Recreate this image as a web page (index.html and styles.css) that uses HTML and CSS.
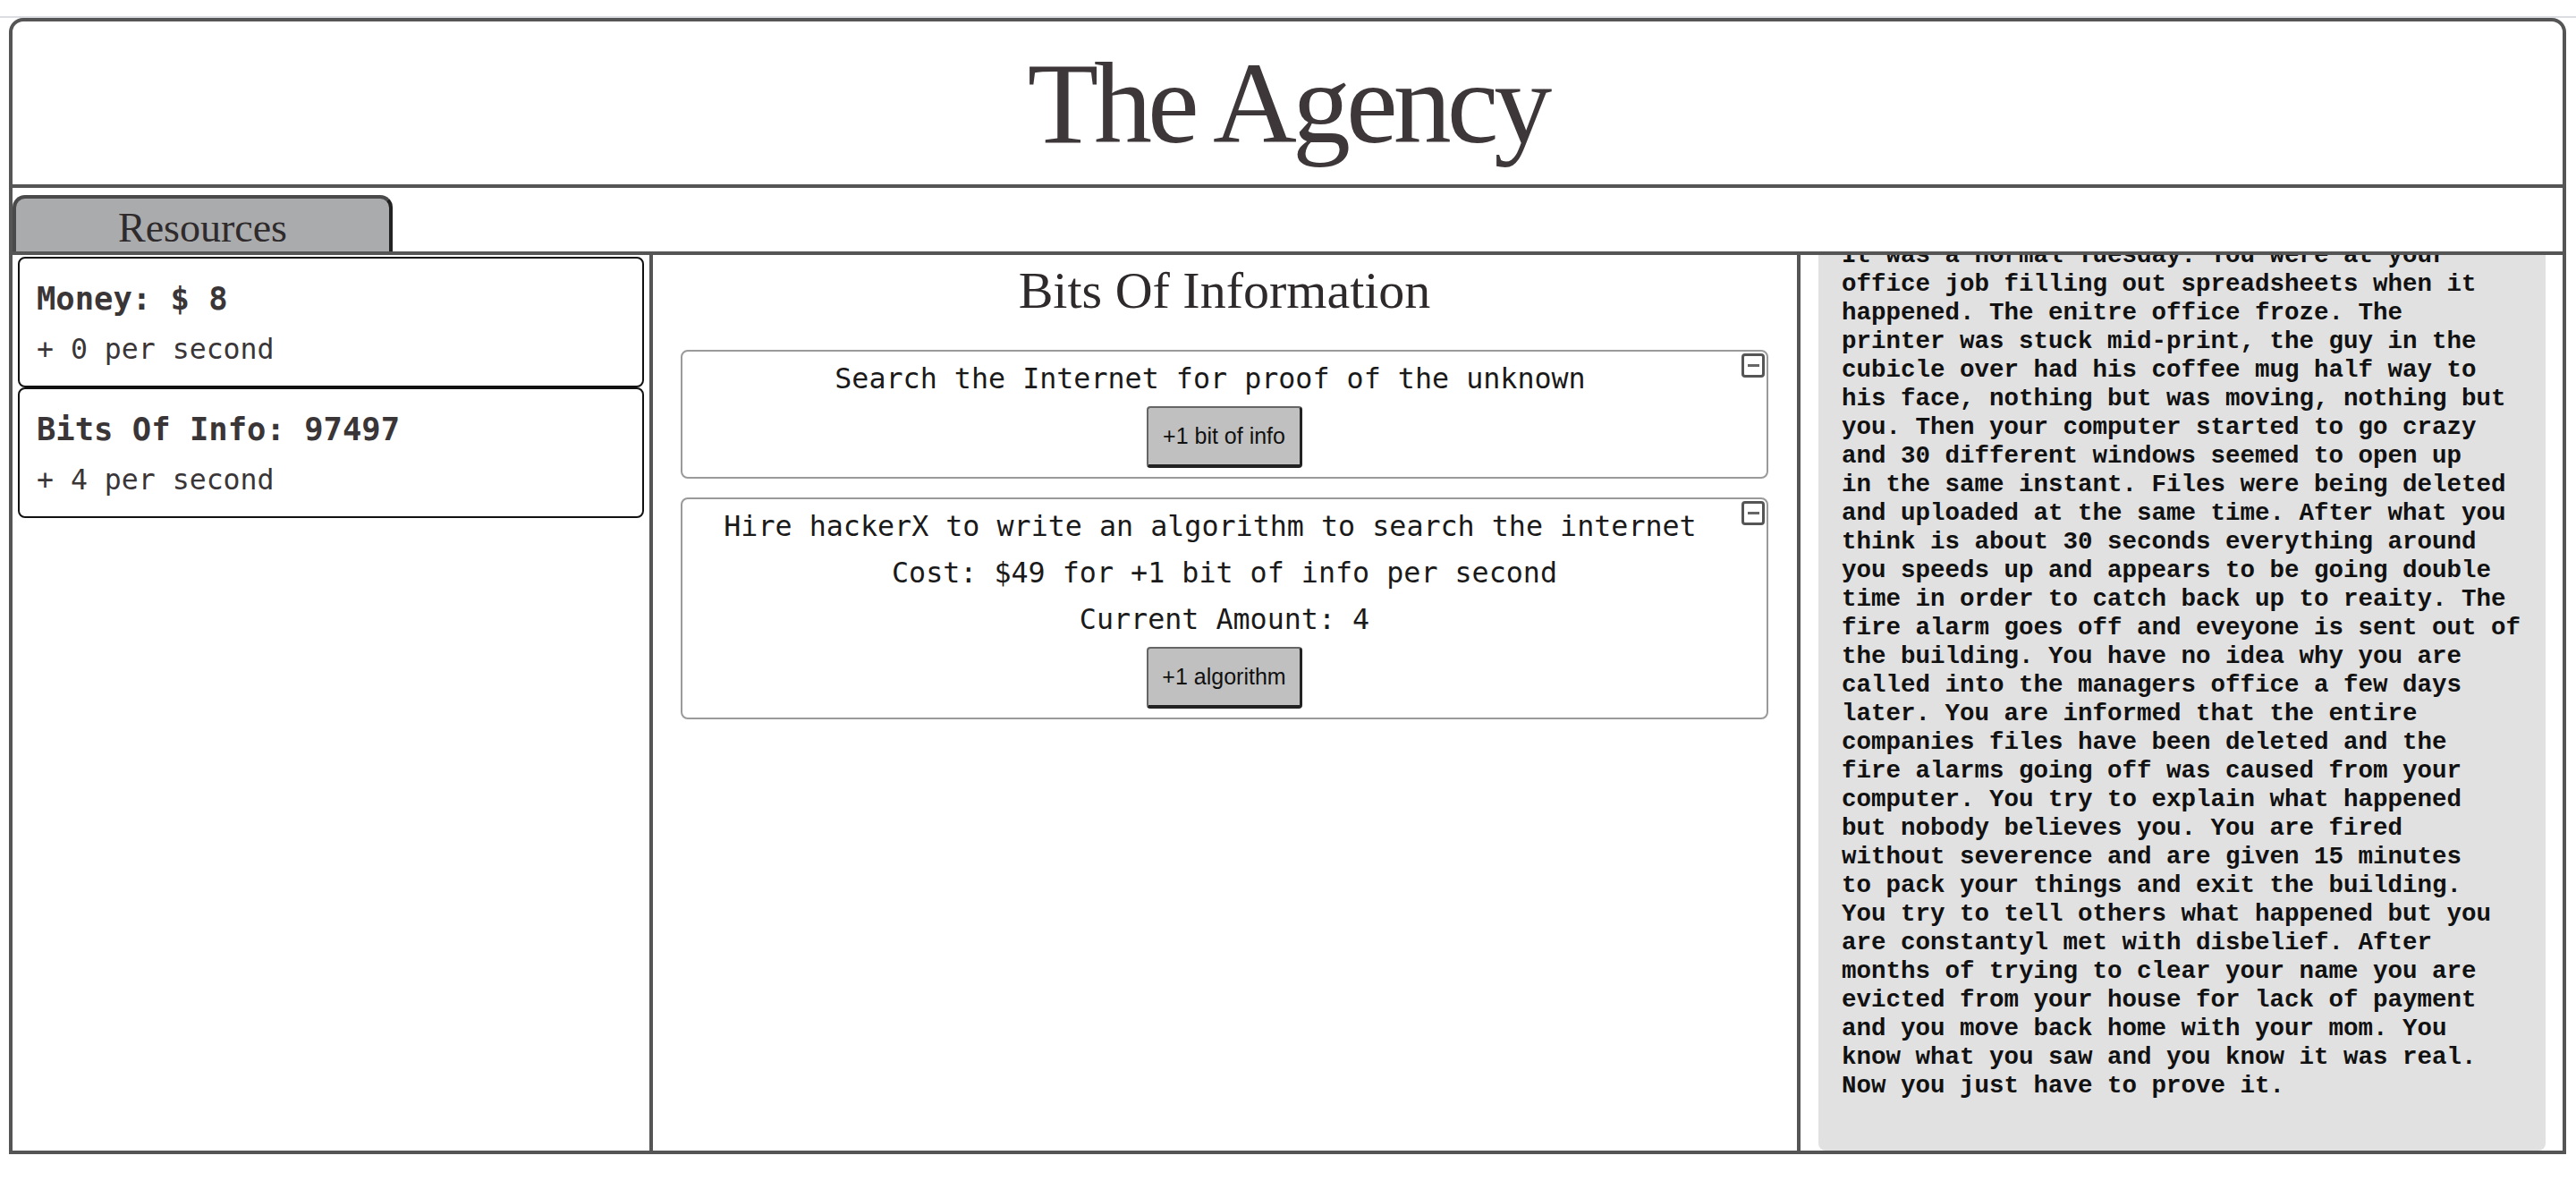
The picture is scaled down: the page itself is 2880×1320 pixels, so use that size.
FILE: index.html
```html
<!DOCTYPE html>
<html lang="en">
<head>
<meta charset="utf-8">
<title>The Agency</title>
<link rel="stylesheet" href="styles.css">
</head>
<body>
<div class="topline"></div>
<div class="frame">
  <header class="masthead"><h1 class="title">The Agency</h1></header>
  <nav class="tabbar"><div class="tab">Resources</div></nav>
  <main class="columns">
    <section class="col col-res">
      <div class="res-card">
        <h2 class="res-title">Money: $ 8</h2>
        <p class="res-rate">+ 0 per second</p>
      </div>
      <div class="res-card">
        <h2 class="res-title">Bits Of Info: 97497</h2>
        <p class="res-rate">+ 4 per second</p>
      </div>
    </section>
    <section class="col col-mid">
      <h2 class="mid-title">Bits Of Information</h2>
      <div class="task">
        <button class="collapse"><span class="collapse-bar"></span></button>
        <p class="task-line">Search the Internet for proof of the unknown</p>
        <button class="task-btn">+1 bit of info</button>
      </div>
      <div class="task">
        <button class="collapse"><span class="collapse-bar"></span></button>
        <p class="task-line">Hire hackerX to write an algorithm to search the internet</p>
        <p class="task-line">Cost: $49 for +1 bit of info per second</p>
        <p class="task-line">Current Amount: 4</p>
        <button class="task-btn">+1 algorithm</button>
      </div>
    </section>
    <section class="col col-story">
      <div class="story">
        <p class="story-text">It was a normal Tuesday. You were at your<br>office job filling out spreadsheets when it<br>happened. The enitre office froze. The<br>printer was stuck mid-print, the guy in the<br>cubicle over had his coffee mug half way to<br>his face, nothing but was moving, nothing but<br>you. Then your computer started to go crazy<br>and 30 different windows seemed to open up<br>in the same instant. Files were being deleted<br>and uploaded at the same time. After what you<br>think is about 30 seconds everything around<br>you speeds up and appears to be going double<br>time in order to catch back up to reaity. The<br>fire alarm goes off and eveyone is sent out of<br>the building. You have no idea why you are<br>called into the managers office a few days<br>later. You are informed that the entire<br>companies files have been deleted and the<br>fire alarms going off was caused from your<br>computer. You try to explain what happened<br>but nobody believes you. You are fired<br>without severence and are given 15 minutes<br>to pack your things and exit the building.<br>You try to tell others what happened but you<br>are constantyl met with disbelief. After<br>months of trying to clear your name you are<br>evicted from your house for lack of payment<br>and you move back home with your mom. You<br>know what you saw and you know it was real.<br>Now you just have to prove it.</p>
      </div>
    </section>
  </main>
</div>
</body>
</html>
```

FILE: styles.css
```css
html, body {
  margin: 0;
  background: #ffffff;
}

body {
  padding-top: 18px;
  font-family: "DejaVu Sans Mono", monospace;
}

.topline {
  height: 2px;
  background: #dcdce3;
}

.frame {
  margin: 0 11px 0 10px;
  height: 1270px;
  box-sizing: border-box;
  border: 4px solid #555555;
  border-radius: 16px 16px 0 0;
  display: flex;
  flex-direction: column;
}

.masthead {
  height: 182px;
  flex-shrink: 0;
  border-bottom: 4px solid #555555;
  display: flex;
  align-items: center;
  justify-content: center;
}

.title {
  margin: 0;
  font-family: "Liberation Serif", serif;
  font-weight: normal;
  font-size: 130px;
  letter-spacing: -5px;
  color: #3e3739;
}

.tabbar {
  height: 71px;
  flex-shrink: 0;
  border-bottom: 4px solid #555555;
  display: flex;
  align-items: flex-end;
}

.tab {
  width: 425px;
  height: 63px;
  box-sizing: border-box;
  background: #aaabad;
  border: 4px solid #4a4a4a;
  border-right-color: #222222;
  border-bottom: 0;
  border-radius: 14px 14px 0 0;
  padding-top: 6px;
  font-family: "Liberation Serif", serif;
  font-size: 46px;
  line-height: 53px;
  text-align: center;
  color: #2f2a2b;
}

.columns {
  flex: 1;
  min-height: 0;
  display: grid;
  grid-template-columns: 716px 1283px 1fr;
  grid-template-rows: minmax(0, 1fr);
}

.col {
  box-sizing: border-box;
  min-height: 0;
}

.col-res {
  border-right: 4px solid #555555;
  padding: 2px 6px 0;
}

.res-card {
  border: 2px solid #111111;
  border-radius: 8px;
  padding: 20px 20px 16px 19px;
  color: #3a3537;
}

.res-title {
  margin: 0;
  font-family: "DejaVu Sans Mono", monospace;
  font-weight: bold;
  font-size: 35.5px;
  line-height: 50px;
}

.res-rate {
  margin: 6px 0 0;
  font-family: "DejaVu Sans Mono", monospace;
  font-size: 31.5px;
  line-height: 50px;
}

.col-mid {
  border-right: 4px solid #555555;
  padding: 0 32px 0 31px;
}

.mid-title {
  margin: 6px 0 33px;
  font-family: "Liberation Serif", serif;
  font-weight: normal;
  font-size: 58px;
  text-align: center;
  color: #2e2a2b;
}

.task {
  border: 2px solid #9a9a9a;
  border-radius: 8px;
  padding: 4px 0 10px;
  margin-bottom: 21px;
  text-align: center;
}

.task-line {
  margin: 0;
  font-family: "DejaVu Sans Mono", monospace;
  font-size: 31.7px;
  line-height: 52px;
  color: #1a1a1a;
}

.task-btn {
  display: block;
  margin: 5px auto 0;
  width: 174px;
  height: 69px;
  padding: 0;
  background: #c0c0c0;
  border-style: solid;
  border-width: 2px 3px 4px 2px;
  border-color: #666666 #222222 #222222 #666666;
  border-radius: 4px;
  font-family: "Liberation Sans", sans-serif;
  font-size: 25px;
  color: #111111;
}

.collapse {
  float: right;
  margin: -2px 2px 0 4px;
  width: 26px;
  height: 27px;
  box-sizing: border-box;
  padding: 0;
  background: #ffffff;
  border: 3px solid #555555;
  border-radius: 4px;
  display: flex;
  align-items: center;
  justify-content: center;
}

.collapse-bar {
  display: block;
  width: 13px;
  height: 3px;
  background: #666666;
}

.col-story {
  overflow: hidden;
  display: flex;
  flex-direction: column;
  justify-content: flex-end;
  padding: 0 19px 0 20px;
}

.story {
  flex-shrink: 0;
  background: #e1e1e1;
  border-radius: 8px;
  padding: 26px 20px 56px 26px;
}

.story-text {
  margin: 0;
  font-family: "Liberation Mono", monospace;
  font-weight: bold;
  font-size: 27.5px;
  line-height: 32px;
  white-space: nowrap;
  color: #111111;
}
```
